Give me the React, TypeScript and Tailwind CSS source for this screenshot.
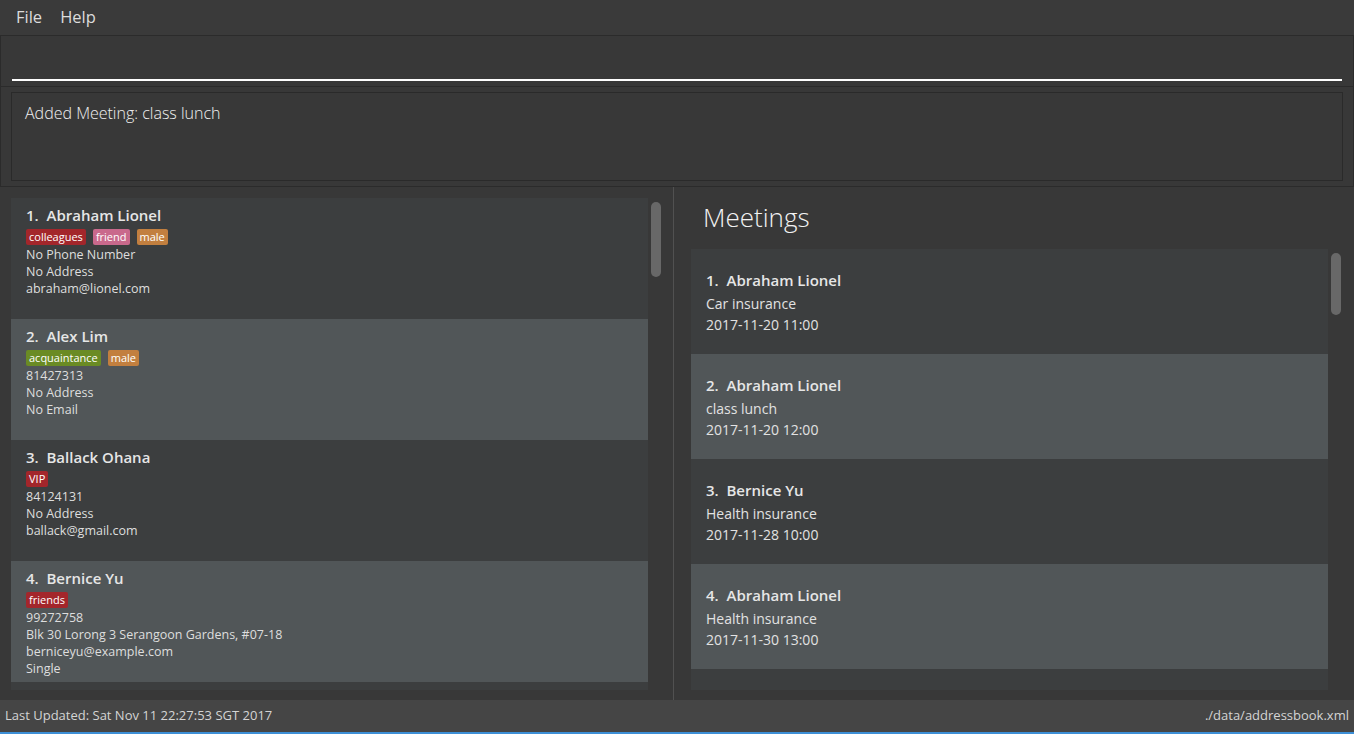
import React from "react";

type Person = {
  name: string;
  tags: { label: string; color: string }[];
  lines: string[];
};

const people: Person[] = [
  {
    name: "Abraham Lionel",
    tags: [
      { label: "colleagues", color: "bg-[#a3262b]" },
      { label: "friend", color: "bg-[#c9698c]" },
      { label: "male", color: "bg-[#c27f3f]" },
    ],
    lines: ["No Phone Number", "No Address", "abraham@lionel.com"],
  },
  {
    name: "Alex Lim",
    tags: [
      { label: "acquaintance", color: "bg-[#6a8b24]" },
      { label: "male", color: "bg-[#c27f3f]" },
    ],
    lines: ["81427313", "No Address", "No Email"],
  },
  {
    name: "Ballack Ohana",
    tags: [{ label: "VIP", color: "bg-[#a3262b]" }],
    lines: ["84124131", "No Address", "ballack@gmail.com"],
  },
  {
    name: "Bernice Yu",
    tags: [{ label: "friends", color: "bg-[#a3262b]" }],
    lines: ["99272758", "Blk 30 Lorong 3 Serangoon Gardens, #07-18", "berniceyu@example.com", "Single"],
  },
];

const meetings = [
  { name: "Abraham Lionel", subject: "Car insurance", when: "2017-11-20 11:00" },
  { name: "Abraham Lionel", subject: "class lunch", when: "2017-11-20 12:00" },
  { name: "Bernice Yu", subject: "Health insurance", when: "2017-11-28 10:00" },
  { name: "Abraham Lionel", subject: "Health insurance", when: "2017-11-30 13:00" },
];

function PersonCard({ p, i }: { p: Person; i: number }) {
  return (
    <div className={`h-[121px] shrink-0 pl-[15px] pt-[7px] ${i % 2 ? "bg-[#515658]" : "bg-[#3c3e3f]"}`}>
      <div className="text-[15px] leading-[20px] font-semibold text-[#e6e6e6]">
        {i + 1}.&nbsp;&nbsp;{p.name}
      </div>
      <div className="mt-[4px] flex h-[16px] gap-[7px]">
        {p.tags.map((t) => (
          <span
            key={t.label}
            className={`${t.color} rounded-[2px] px-[3px] text-[11px] leading-[16px] text-white`}
          >
            {t.label}
          </span>
        ))}
      </div>
      <div className="mt-[1px] text-[12.5px] leading-[17px] text-[#dedede]">
        {p.lines.map((l) => (
          <div key={l}>{l}</div>
        ))}
      </div>
    </div>
  );
}

function MeetingCard({ m, i }: { m: (typeof meetings)[number]; i: number }) {
  return (
    <div className={`h-[105px] shrink-0 pl-[15px] pt-[21px] ${i % 2 ? "bg-[#515658]" : "bg-[#3c3e3f]"}`}>
      <div className="text-[15px] leading-[20px] font-semibold text-[#e6e6e6]">
        {i + 1}.&nbsp;&nbsp;{m.name}
      </div>
      <div className="mt-[4px] text-[14px] leading-[20px] text-[#e2e2e2]">{m.subject}</div>
      <div className="text-[14px] leading-[21px] text-[#e2e2e2]">{m.when}</div>
    </div>
  );
}

export default function App() {
  return (
    <div
      className="flex h-[734px] w-[1354px] flex-col overflow-hidden bg-[#383838]"
      style={{ fontFamily: '"Open Sans", "Noto Sans", sans-serif' }}
    >
      {/* menu bar */}
      <div className="flex h-[35px] shrink-0 items-center gap-[18px] bg-[#3a3a3a] pl-[16px] text-[16.5px] text-[#dcdcdc]">
        <span>File</span>
        <span>Help</span>
      </div>

      {/* command box */}
      <div className="h-[52px] shrink-0 border border-[#2b2b2b] px-[11px] pt-[43px]">
        <div className="h-[2px] bg-white" />
      </div>

      {/* result display */}
      <div className="h-[100px] shrink-0 border border-t-0 border-[#2b2b2b] px-[10px] pt-[5px] pb-[5px]">
        <div className="h-full border border-[#2a2a2a] px-[13px] pt-[8px] text-[16px] font-light text-[#f0f0f0]">
          Added Meeting: class lunch
        </div>
      </div>

      {/* main split */}
      <div className="flex min-h-0 flex-1">
        <div className="flex w-[673px] shrink-0 pl-[11px] pt-[11px] pb-[10px]">
          <div className="flex w-[637px] flex-col overflow-hidden">
            {people.map((p, i) => (
              <PersonCard key={p.name} p={p} i={i} />
            ))}
            <div className="h-[20px] shrink-0 bg-[#3c3e3f]" />
          </div>
          <div className="ml-[3px] w-[10px] pt-[4px]">
            <div className="h-[75px] rounded-full bg-[#686868]" />
          </div>
        </div>
        <div className="w-px bg-[#515151]" />
        <div className="flex flex-1 flex-col pl-[17px] pb-[10px]">
          <div className="flex h-[62px] shrink-0 items-center pl-[12px] pb-[2px] text-[26px] font-light text-[#f2f2f2]">
            Meetings
          </div>
          <div className="flex min-h-0 flex-1">
            <div className="flex w-[637px] flex-col overflow-hidden">
              {meetings.map((m, i) => (
                <MeetingCard key={i} m={m} i={i} />
              ))}
              <div className="h-[30px] shrink-0 bg-[#3c3e3f]" />
            </div>
            <div className="ml-[3px] w-[10px] pt-[4px]">
              <div className="h-[62px] rounded-full bg-[#686868]" />
            </div>
          </div>
        </div>
      </div>

      {/* status bar */}
      <div className="flex h-[34px] shrink-0 items-center justify-between border-b-2 border-[#3d8fd6] bg-[#454545] pl-[5px] pr-[5px] text-[13px] text-[#d4d4d4]">
        <span>Last Updated: Sat Nov 11 22:27:53 SGT 2017</span>
        <span>./data/addressbook.xml</span>
      </div>
    </div>
  );
}
